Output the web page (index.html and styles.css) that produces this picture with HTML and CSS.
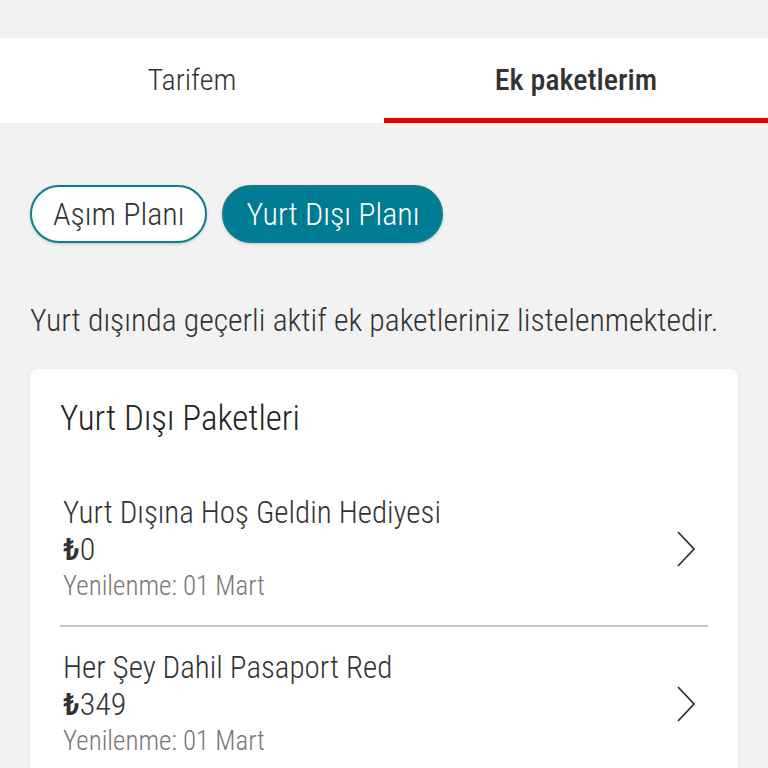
FILE: index.html
```html
<!DOCTYPE html>
<html lang="tr">
<head>
<meta charset="utf-8">
<link rel="stylesheet" href="styles.css">
</head>
<body>
<div class="top-space"></div>
<nav class="tabs">
  <div class="tab">Tarifem</div>
  <div class="tab active">Ek paketlerim</div>
</nav>
<main class="content">
  <div class="chips">
    <button class="chip">Aşım Planı</button>
    <button class="chip selected">Yurt Dışı Planı</button>
  </div>
  <p class="desc">Yurt dışında geçerli aktif ek paketleriniz listelenmektedir.</p>
  <section class="card">
    <h2 class="card-title">Yurt Dışı Paketleri</h2>
    <div class="item">
      <div class="item-text">
        <div class="item-name">Yurt Dışına Hoş Geldin Hediyesi</div>
        <div class="item-price"><span class="cur">₺</span>0</div>
        <div class="item-renew">Yenilenme: 01 Mart</div>
      </div>
      <svg class="chev" width="20" height="36" viewBox="0 0 20 36"><path d="M2 1 L18 18 L2 35" fill="none" stroke="#333" stroke-width="1.8"/></svg>
    </div>
    <div class="divider"></div>
    <div class="item">
      <div class="item-text">
        <div class="item-name">Her Şey Dahil Pasaport Red</div>
        <div class="item-price"><span class="cur">₺</span>349</div>
        <div class="item-renew">Yenilenme: 01 Mart</div>
      </div>
      <svg class="chev" width="20" height="36" viewBox="0 0 20 36"><path d="M2 1 L18 18 L2 35" fill="none" stroke="#333" stroke-width="1.8"/></svg>
    </div>
  </section>
</main>
</body>
</html>
```
FILE: styles.css
```css
* { box-sizing: border-box; }
body {
  margin: 0;
  background: #f2f2f2;
  font-family: Roboto, "Liberation Sans", Arial, sans-serif;
  font-stretch: condensed;
  font-weight: 300;
  color: #333;
}
.top-space { height: 38px; }
.tabs {
  display: flex;
  background: #fff;
  height: 85px;
}
.tab {
  flex: 1;
  display: flex;
  align-items: center;
  justify-content: center;
  font-size: 30px;
  color: #333;
  padding-top: 2px;
  border-bottom: 5px solid transparent;
}
.tab.active {
  border-bottom-color: #e60000;
  font-weight: 500;
}
.content { padding: 62px 30px 0; }
.chips { display: flex; gap: 15px; }
.chip {
  height: 58px;
  border-radius: 29px;
  font-family: inherit;
  font-stretch: condensed;
  font-weight: 300;
  font-size: 32px;
  padding: 0 21px;
  border: 2px solid #0d7d8f;
  background: #fff;
  color: #333;
  box-shadow: 0 1px 3px rgba(0,0,0,0.2);
}
.chip.selected {
  background: #007c92;
  color: #fff;
  padding: 0 22px;
}
.desc {
  margin: 60px 0 0;
  font-size: 31.7px;
  line-height: 36px;
  color: #333;
}
.card {
  margin-top: 30px;
  background: #fff;
  border-radius: 8px;
  padding: 30px 30px 0;
  box-shadow: 0 1px 4px rgba(0,0,0,0.08);
}
.card-title {
  margin: 0 0 33px;
  font-size: 35px;
  font-weight: 300;
  line-height: 40px;
  color: #222;
}
.item {
  display: flex;
  align-items: center;
  padding: 22px 0 21px 3px;
}
.item-text { flex: 1; }
.item-name { font-size: 31px; line-height: 37px; color: #333; }
.item-price { font-size: 32px; line-height: 37px; font-weight: 300; color: #333; }
.cur { font-weight: 500; }
.item-renew { font-size: 27px; line-height: 36px; color: #777; }
.chev { margin-right: 12px; }
.divider { height: 2px; background: #c8c8c8; }
```
